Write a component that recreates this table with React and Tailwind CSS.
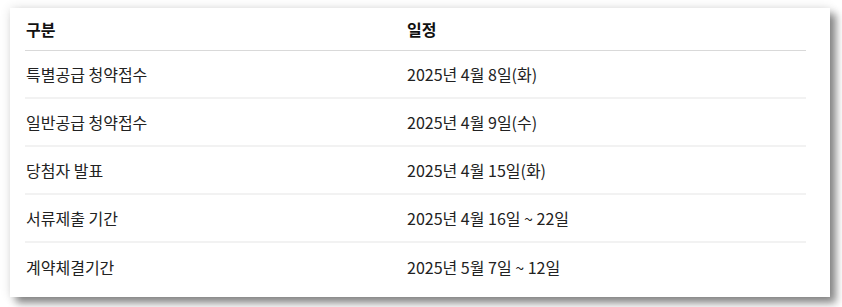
import React from 'react';

const rows = [
    { label: '특별공급 청약접수', date: '2025년 4월 8일(화)' },
    { label: '일반공급 청약접수', date: '2025년 4월 9일(수)' },
    { label: '당첨자 발표', date: '2025년 4월 15일(화)' },
    { label: '서류제출 기간', date: '2025년 4월 16일 ~ 22일' },
    { label: '계약체결기간', date: '2025년 5월 7일 ~ 12일' },
];

export default function App() {
    return (
        <div className="w-[842px] h-[307px] bg-white pt-[8px] pl-[10px]">
            <div
                className="w-[820px] h-[289px] bg-white pl-[15px] pr-[24px] shadow-[6px_6px_8px_rgba(0,0,0,0.45),0_0_10px_rgba(0,0,0,0.12)]"
                style={{ fontFamily: '"Noto Sans CJK KR", "Noto Sans", sans-serif' }}
            >
                <div className="grid grid-cols-[382px_1fr] h-[43px] items-center border-b border-[#d9d9d9] text-[16px] font-bold text-[#111]">
                    <div className="pl-[1px]">구분</div>
                    <div>일정</div>
                </div>
                {rows.map((row, i) => (
                    <div
                        key={row.label}
                        className={`grid grid-cols-[382px_1fr] h-[48px] items-center text-[16px] text-[#222] ${i < rows.length - 1 ? 'border-b-2 border-[#f2f2f2]' : ''}`}
                    >
                        <div className="pl-[1px]">{row.label}</div>
                        <div>{row.date}</div>
                    </div>
                ))}
            </div>
        </div>
    );
}
